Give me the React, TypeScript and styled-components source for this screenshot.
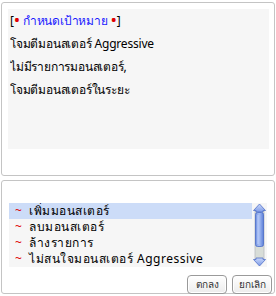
import React from 'react';
import styled, { createGlobalStyle } from 'styled-components';

const GlobalStyle = createGlobalStyle`
  html, body {
    margin: 0;
    padding: 0;
    background: #ffffff;
  }
  body {
    font-family: Tahoma, "Noto Sans", "DejaVu Sans", sans-serif;
    font-size: 12px;
  }
`

const Page = styled.div`
    width: 276px;
    height: 296px;
    padding: 2px 1px 0 1px;
    box-sizing: border-box;
    display: flex;
    flex-direction: column;
    gap: 4px;
`

const Panel = styled.div<{ h: number }>`
    height: ${({ h }) => h}px;
    border: 1px solid #c4c4c4;
    border-radius: 3px;
    box-sizing: border-box;
    background: #ffffff;
    display: flex;
    flex-direction: column;
`

const InfoBox = styled.div`
    margin: 6px 5px 0 6px;
    height: 140px;
    background: #f6f6f6;
    padding: 0 2px;
    box-sizing: border-box;
`

const Line = styled.div`
    height: 23px;
    line-height: 23px;
    color: #000000;
    white-space: nowrap;
    overflow: hidden;
    letter-spacing: -0.2px;
`

const Dot = styled.span`
    color: #e00000;
    font-size: 17px;
    line-height: 12px;
    vertical-align: -1px;
`

const Blue = styled.span`
    color: #1a1aff;
`

const ListArea = styled.div`
    margin: 22px 7px 0 7px;
    height: 64px;
    display: flex;
    background: #f6f6f6;
`

const List = styled.div`
    flex: 1;
    overflow: hidden;
`

const Item = styled.div<{ selected?: boolean }>`
    height: 16px;
    line-height: 16px;
    padding-left: 6px;
    font-size: 12px;
    letter-spacing: 0.5px;
    white-space: nowrap;
    overflow: hidden;
    background: ${({ selected }) => (selected ? '#ccdcf8' : 'transparent')};
    color: #000000;
`

const Tilde = styled.span`
    color: #e00000;
    margin-right: 7px;
`

const ScrollBar = styled.div`
    width: 13px;
    padding: 0 1px;
    display: flex;
`

const ButtonRow = styled.div`
    display: flex;
    justify-content: flex-end;
    gap: 5px;
    margin: 8px 2px 0 0;
`

const Button = styled.div`
    width: 40px;
    height: 19px;
    box-sizing: border-box;
    border: 1px solid #9a9a9a;
    border-radius: 4px;
    background: linear-gradient(#ffffff, #ececec);
    box-shadow: inset 0 0 0 1px #ffffff;
    color: #333333;
    font-size: 10px;
    display: flex;
    align-items: center;
    justify-content: center;
`

const Scroll = () => (
    <svg width="13" height="64" viewBox="0 0 13 64">
        <defs>
            <linearGradient id="thumb" x1="0" x2="1" y1="0" y2="0">
                <stop offset="0" stopColor="#6f8fe0" />
                <stop offset="0.45" stopColor="#a9c0f4" />
                <stop offset="1" stopColor="#5b7ed8" />
            </linearGradient>
            <linearGradient id="arrow" x1="0" x2="0" y1="0" y2="1">
                <stop offset="0" stopColor="#c9d8fb" />
                <stop offset="1" stopColor="#7e9be6" />
            </linearGradient>
        </defs>
        <rect x="2" y="8" width="9" height="48" fill="#d8ddd8" stroke="#b8bcc0" strokeWidth="0.8" />
        <path d="M6.5 1 L12.5 7.5 L10 7.5 L10 9 L3 9 L3 7.5 L0.5 7.5 Z" fill="url(#arrow)" stroke="#5070c8" strokeWidth="0.8" />
        <rect x="2.5" y="9.5" width="8" height="34" rx="2" fill="url(#thumb)" stroke="#4a6cc8" strokeWidth="0.8" />
        <line x1="5" y1="12" x2="5" y2="41" stroke="#c8d8ff" strokeWidth="0.8" />
        <path d="M6.5 63 L12.5 56.5 L10 56.5 L10 55 L3 55 L3 56.5 L0.5 56.5 Z" fill="url(#arrow)" stroke="#5070c8" strokeWidth="0.8" />
    </svg>
)

const App: React.FC = () => {
    return (
        <>
            <GlobalStyle />
            <Page>
                <Panel h={174}>
                    <InfoBox>
                        <Line>[<Dot>•</Dot> <Blue>กำหนดเป้าหมาย</Blue> <Dot>•</Dot>]</Line>
                        <Line>โจมตีมอนสเตอร์ Aggressive</Line>
                        <Line>ไม่มีรายการมอนสเตอร์,</Line>
                        <Line>โจมตีมอนสเตอร์ในระยะ</Line>
                    </InfoBox>
                </Panel>
                <Panel h={114}>
                    <ListArea>
                        <List>
                            <Item selected><Tilde>~</Tilde>เพิ่มมอนสเตอร์</Item>
                            <Item><Tilde>~</Tilde>ลบมอนสเตอร์</Item>
                            <Item><Tilde>~</Tilde>ล้างรายการ</Item>
                            <Item><Tilde>~</Tilde>ไม่สนใจมอนสเตอร์ Aggressive</Item>
                        </List>
                        <ScrollBar>
                            <Scroll />
                        </ScrollBar>
                    </ListArea>
                    <ButtonRow>
                        <Button>ตกลง</Button>
                        <Button>ยกเลิก</Button>
                    </ButtonRow>
                </Panel>
            </Page>
        </>
    );
}

export default App;
